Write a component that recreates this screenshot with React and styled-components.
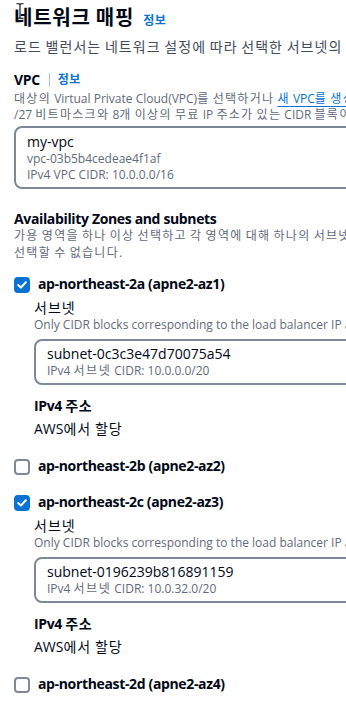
import React from "react";
import styled, { createGlobalStyle } from "styled-components";

const Global = createGlobalStyle`
  html, body { margin: 0; padding: 0; background: #fff; overflow: hidden; }
  body { font-family: "Open Sans", "Noto Sans CJK KR", sans-serif; color: #000716; }
`;

const Page = styled.div`
  position: relative;
  width: 440px;
  padding: 4px 0 0 14px;
  box-sizing: border-box;
  white-space: nowrap;
  display: flex;
  flex-direction: column;
`;

const Ko = styled.span`
  letter-spacing: var(--hs, 1px);
`;

const HANGUL = /([\u1100-\u11FF\u3130-\u318F\uAC00-\uD7AF]+)/;
const T = ({ children }) =>
  String(children)
    .split(HANGUL)
    .map((part, i) => (i % 2 === 1 ? <Ko key={i}>{part}</Ko> : part));

const Cursor = styled.svg`
  position: absolute;
  left: 16px;
  top: 3px;
`;

const TitleRow = styled.div`
  display: flex;
  align-items: baseline;
  gap: 9px;
  line-height: 28px;
`;

const Title = styled.h1`
  margin: 0;
  font-size: 20px;
  font-weight: 700;
  line-height: 28px;
  color: #000716;
  --hs: 0.75px;
`;

const Info = styled.a`
  color: #0972d3;
  font-size: 12px;
  font-weight: 700;
  text-decoration: none;
  --hs: 0.5px;
`;

const Lead = styled.p`
  margin: 3px 0 0;
  font-size: 14px;
  line-height: 18px;
  color: #414d5c;
  --hs: 1.05px;
`;

const FieldHeader = styled.div`
  display: flex;
  align-items: center;
  margin-top: ${(p) => p.$mt || 0}px;
  height: ${(p) => p.$h || 22}px;
  line-height: ${(p) => p.$h || 22}px;
`;

const Label = styled.span`
  font-size: 14px;
  font-weight: 700;
  letter-spacing: -0.35px;
  color: #000716;
  --hs: 0.6px;
`;

const Divider = styled.span`
  width: 1px;
  height: 14px;
  background: #b6bec9;
  margin: 0 8px 0 9px;
`;

const Desc = styled.div`
  font-size: 12px;
  line-height: 16px;
  color: #5f6b7a;
  margin-top: ${(p) => p.$mt || 0}px;
  --hs: 1.3px;
`;

const DescLink = styled.span`
  color: #0972d3;
  text-decoration: underline;
  text-decoration-thickness: 1px;
  text-underline-offset: 3px;
`;

const Box = styled.div`
  border: 2px solid #7d8998;
  border-radius: 8px;
  padding: ${(p) => (p.$tall ? "4px 11px 4px" : "3px 11px 4px")};
  margin-top: ${(p) => p.$mt || 0}px;
  display: flex;
  flex-direction: column;
`;

const BoxMain = styled.div`
  font-size: 14px;
  line-height: 19px;
  color: #000716;
`;

const BoxSub = styled.div`
  font-size: 12px;
  line-height: 16px;
  color: #5f6b7a;
  --hs: 1.5px;
`;

const ZoneRow = styled.div`
  display: flex;
  align-items: flex-start;
  gap: 8px;
  line-height: 20px;
  margin-top: ${(p) => p.$mt || 0}px;
`;

const Check = styled.span`
  width: 16px;
  height: 16px;
  margin-top: 3px;
  box-sizing: border-box;
  border-radius: 4px;
  border: 2px solid ${(p) => (p.$on ? "#0972d3" : "#7d8998")};
  background: ${(p) => (p.$on ? "#0972d3" : "#fff")};
  display: flex;
  align-items: center;
  justify-content: center;
  flex: none;
`;

const ZoneBody = styled.div`
  padding-left: 20px;
  display: flex;
  flex-direction: column;
`;

const SubLabel = styled.div`
  font-size: 14px;
  line-height: ${(p) => p.$lh || 20}px;
  margin-top: ${(p) => p.$mt || 0}px;
  font-weight: ${(p) => (p.$bold ? 700 : 400)};
  letter-spacing: ${(p) => (p.$bold ? "-0.35px" : "0")};
  color: #000716;
  --hs: ${(p) => (p.$bold ? "0.6px" : "1px")};
`;

const Zone = ({ name, on, subnet, cidr, mt }) => (
  <>
    <ZoneRow $mt={mt}>
      <Check $on={on}>
        {on && (
          <svg width="10" height="8" viewBox="0 0 10 8">
            <path d="M1.2 4.1 L3.9 6.6 L8.8 1.3" fill="none" stroke="#fff" strokeWidth="2" strokeLinecap="round" strokeLinejoin="round" />
          </svg>
        )}
      </Check>
      <Label>{name}</Label>
    </ZoneRow>
    {on && (
      <ZoneBody>
        <SubLabel $mt={4} $lh={19}><T>서브넷</T></SubLabel>
        <Desc>Only CIDR blocks corresponding to the load balancer IP address type are shown</Desc>
        <Box $mt={6}>
          <BoxMain>{subnet}</BoxMain>
          <BoxSub><T>{cidr}</T></BoxSub>
        </Box>
        <SubLabel $bold $mt={11}><T>IPv4 주소</T></SubLabel>
        <SubLabel $mt={3}><T>AWS에서 할당</T></SubLabel>
      </ZoneBody>
    )}
  </>
);

export default function App() {
  return (
    <>
      <Global />
      <Page>
        <Cursor width="8" height="16" viewBox="0 0 8 16">
          <path d="M0.5 0.8 H3 Q4 0.8 4 2 V14 Q4 15.2 3 15.2 H0.5 M7.5 0.8 H5 Q4 0.8 4 2 M4 14 Q4 15.2 5 15.2 H7.5" stroke="#000" strokeWidth="1.1" fill="none" />
        </Cursor>
        <TitleRow>
          <Title><T>네트워크 매핑</T></Title>
          <Info><T>정보</T></Info>
        </TitleRow>
        <Lead><T>로드 밸런서는 네트워크 설정에 따라 선택한 서브넷의 가용 영역으로 트래픽을 라우팅합니다.</T></Lead>
        <FieldHeader $mt={13}>
          <Label>VPC</Label>
          <Divider />
          <Info><T>정보</T></Info>
        </FieldHeader>
        <Desc>
          <T>대상의 Virtual Private Cloud(VPC)를 선택하거나 </T>
          <DescLink><T>새 VPC를 생성</T></DescLink>
          <T>합니다. 최소</T>
        </Desc>
        <Desc><T>/27 비트마스크와 8개 이상의 무료 IP 주소가 있는 CIDR 블록이 있는 VPC만 선택할 수 있습니다.</T></Desc>
        <Box $tall $mt={3}>
          <BoxMain>my-vpc</BoxMain>
          <BoxSub>vpc-03b5b4cedeae4f1af</BoxSub>
          <BoxSub>IPv4 VPC CIDR: 10.0.0.0/16</BoxSub>
        </Box>
        <FieldHeader $mt={21} $h={18}>
          <Label>Availability Zones and subnets</Label>
        </FieldHeader>
        <Desc><T>가용 영역을 하나 이상 선택하고 각 영역에 대해 하나의 서브넷을 선택합니다. 로드 밸런서를</T></Desc>
        <Desc $mt={1}><T>선택할 수 없습니다.</T></Desc>
        <Zone mt={13} name="ap-northeast-2a (apne2-az1)" on subnet="subnet-0c3c3e47d70075a54" cidr="IPv4 서브넷 CIDR: 10.0.0.0/20" />
        <Zone mt={17} name="ap-northeast-2b (apne2-az2)" />
        <Zone mt={16} name="ap-northeast-2c (apne2-az3)" on subnet="subnet-0196239b816891159" cidr="IPv4 서브넷 CIDR: 10.0.32.0/20" />
        <Zone mt={17} name="ap-northeast-2d (apne2-az4)" />
      </Page>
    </>
  );
}
